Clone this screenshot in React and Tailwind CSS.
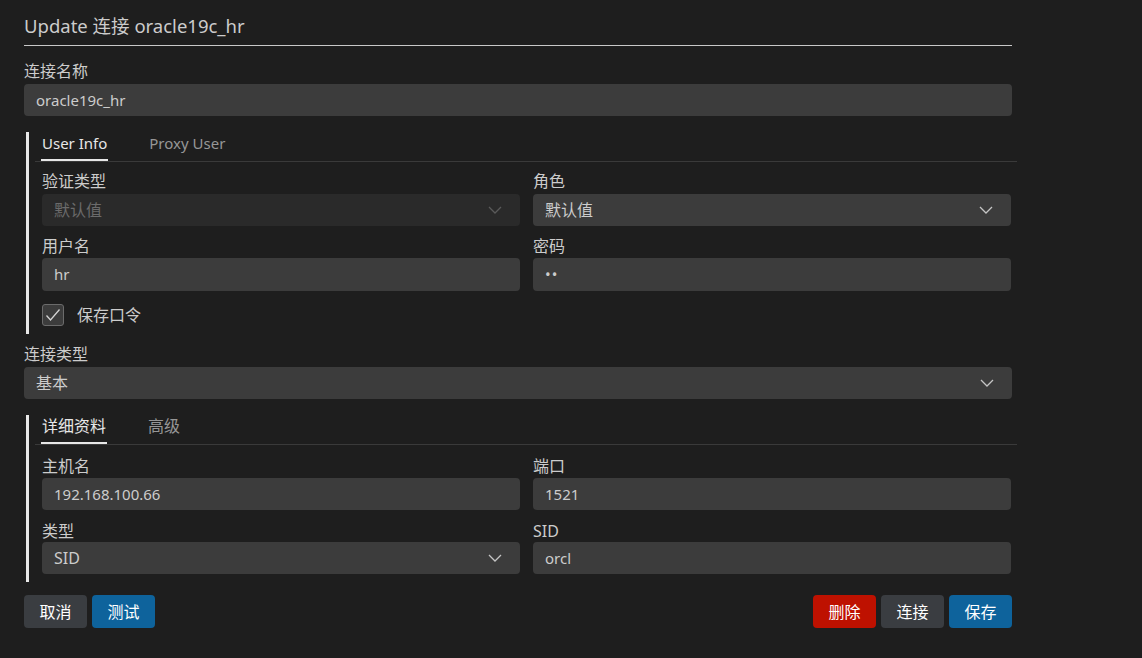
import { useState } from "react";

const font = { fontFamily: '"Noto Sans", "Noto Sans CJK SC", sans-serif' };

const Chevron = ({ dim }) => (
  <svg width="14" height="8" viewBox="0 0 14 8" className={dim ? "text-[#5a5a5a]" : "text-[#c5c5c5]"}>
    <polyline points="1,1 7,7 13,1" fill="none" stroke="currentColor" strokeWidth="1.3" />
  </svg>
);

const Label = ({ children, className = "" }) => (
  <div className={"h-5 leading-5 text-[16px] text-[#cccccc] " + className}>{children}</div>
);

const Field = ({ value, className = "" }) => (
  <div className={"h-[32px] rounded-sm bg-[#3c3c3c] px-3 flex items-center text-[15px] text-[#cccccc] " + className}>
    {value}
  </div>
);

const Select = ({ value, disabled, className = "" }) => (
  <div
    className={
      "h-[32px] rounded-sm px-3 flex items-center justify-between text-[16px] " +
      (disabled ? "bg-[#2a2a2a] text-[#6b6b6b] " : "bg-[#3c3c3c] text-[#cccccc] ") +
      className
    }
  >
    <span>{value}</span>
    <span className="pr-[6px]">
      <Chevron dim={disabled} />
    </span>
  </div>
);

const Tabs = ({ tabs, active, onChange, size }) => (
  <div className="flex ml-[6px] border-b border-[#3a3a3a] pl-[6px] gap-[40px]">
    {tabs.map((t, i) => (
      <button
        key={t}
        onClick={() => onChange(i)}
        className={
          "h-[29px] leading-5 pb-[6px] border-b-2 " +
          size +
          (i === active ? " text-[#e7e7e7] border-[#e7e7e7]" : " text-[#969696] border-transparent")
        }
      >
        <span className="px-[1px]">{t}</span>
      </button>
    ))}
  </div>
);

const App = () => {
  const [tabA, setTabA] = useState(0);
  const [tabB, setTabB] = useState(0);
  const [save, setSave] = useState(true);

  return (
    <div className="min-h-[658px] w-full bg-[#1e1e1e]" style={font}>
      <div className="w-[988px] ml-[24px]">
        <div className="pt-[13px] pb-[6px] border-b border-[#c8c8c8] text-[18.5px] leading-[26px] text-[#cccccc]">
          Update 连接 oracle19c_hr
        </div>

        <Label className="mt-[15px] mb-[3px]">连接名称</Label>
        <Field value="oracle19c_hr" />

        {/* user section */}
        <div className="mt-[16px] ml-[2px] w-[991px] border-l-[3px] border-[#e8e8e8] pb-[7px]">
          <Tabs tabs={["User Info", "Proxy User"]} active={tabA} onChange={setTabA} size="text-[15px]" />
          <div className="pl-[13px] pr-[6px] grid grid-cols-2 gap-x-[13px]">
            <div>
              <Label className="mt-[9px] mb-[3px]">验证类型</Label>
              <Select value="默认值" disabled />
            </div>
            <div>
              <Label className="mt-[9px] mb-[3px]">角色</Label>
              <Select value="默认值" />
            </div>
            <div>
              <Label className="mt-[10px] mb-[2px]">用户名</Label>
              <Field value="hr" className="h-[33px]" />
            </div>
            <div>
              <Label className="mt-[10px] mb-[2px]">密码</Label>
              <Field value="••" className="h-[33px] text-[11px] tracking-[1px]" />
            </div>
          </div>
          <label className="mt-[12px] ml-[13px] flex items-center gap-[13px] cursor-pointer">
            <span
              onClick={() => setSave(!save)}
              className="w-[22px] h-[22px] rounded-[3px] bg-[#3c3c3c] border border-[#6b6b6b] flex items-center justify-center"
            >
              {save && (
                <svg width="16" height="14" viewBox="0 0 16 14">
                  <polyline points="1.5,7.5 5.5,12 14.5,1.5" fill="none" stroke="#d4d4d4" strokeWidth="1.3" />
                </svg>
              )}
            </span>
            <span className="text-[16px] text-[#cccccc]">保存口令</span>
          </label>
        </div>

        <Label className="mt-[10px] mb-[3px]">连接类型</Label>
        <Select value="基本" />

        {/* details section */}
        <div className="mt-[16px] ml-[2px] w-[991px] border-l-[3px] border-[#e8e8e8] pb-[8px]">
          <Tabs tabs={["详细资料", "高级"]} active={tabB} onChange={setTabB} size="text-[16px]" />
          <div className="pl-[13px] pr-[6px] grid grid-cols-2 gap-x-[13px]">
            <div>
              <Label className="mt-[11px] mb-[2px]">主机名</Label>
              <Field value="192.168.100.66" />
            </div>
            <div>
              <Label className="mt-[11px] mb-[2px]">端口</Label>
              <Field value="1521" />
            </div>
            <div>
              <Label className="mt-[11px] mb-[1px]">类型</Label>
              <Select value="SID" className="text-[15px]" />
            </div>
            <div>
              <Label className="mt-[11px] mb-[1px] text-[15px]">SID</Label>
              <Field value="orcl" />
            </div>
          </div>
        </div>

        <div className="mt-[13px] flex items-center justify-between">
          <div className="flex gap-[5px]">
            <button className="w-[63px] h-[33px] rounded-sm bg-[#3a3d41] text-[16px] text-white">取消</button>
            <button className="w-[63px] h-[33px] rounded-sm bg-[#0e639c] text-[16px] text-white">测试</button>
          </div>
          <div className="flex gap-[5px]">
            <button className="w-[63px] h-[33px] rounded-sm bg-[#be1100] text-[16px] text-white">删除</button>
            <button className="w-[63px] h-[33px] rounded-sm bg-[#3a3d41] text-[16px] text-white">连接</button>
            <button className="w-[63px] h-[33px] rounded-sm bg-[#0e639c] text-[16px] text-white">保存</button>
          </div>
        </div>
      </div>
    </div>
  );
};

export default App;
